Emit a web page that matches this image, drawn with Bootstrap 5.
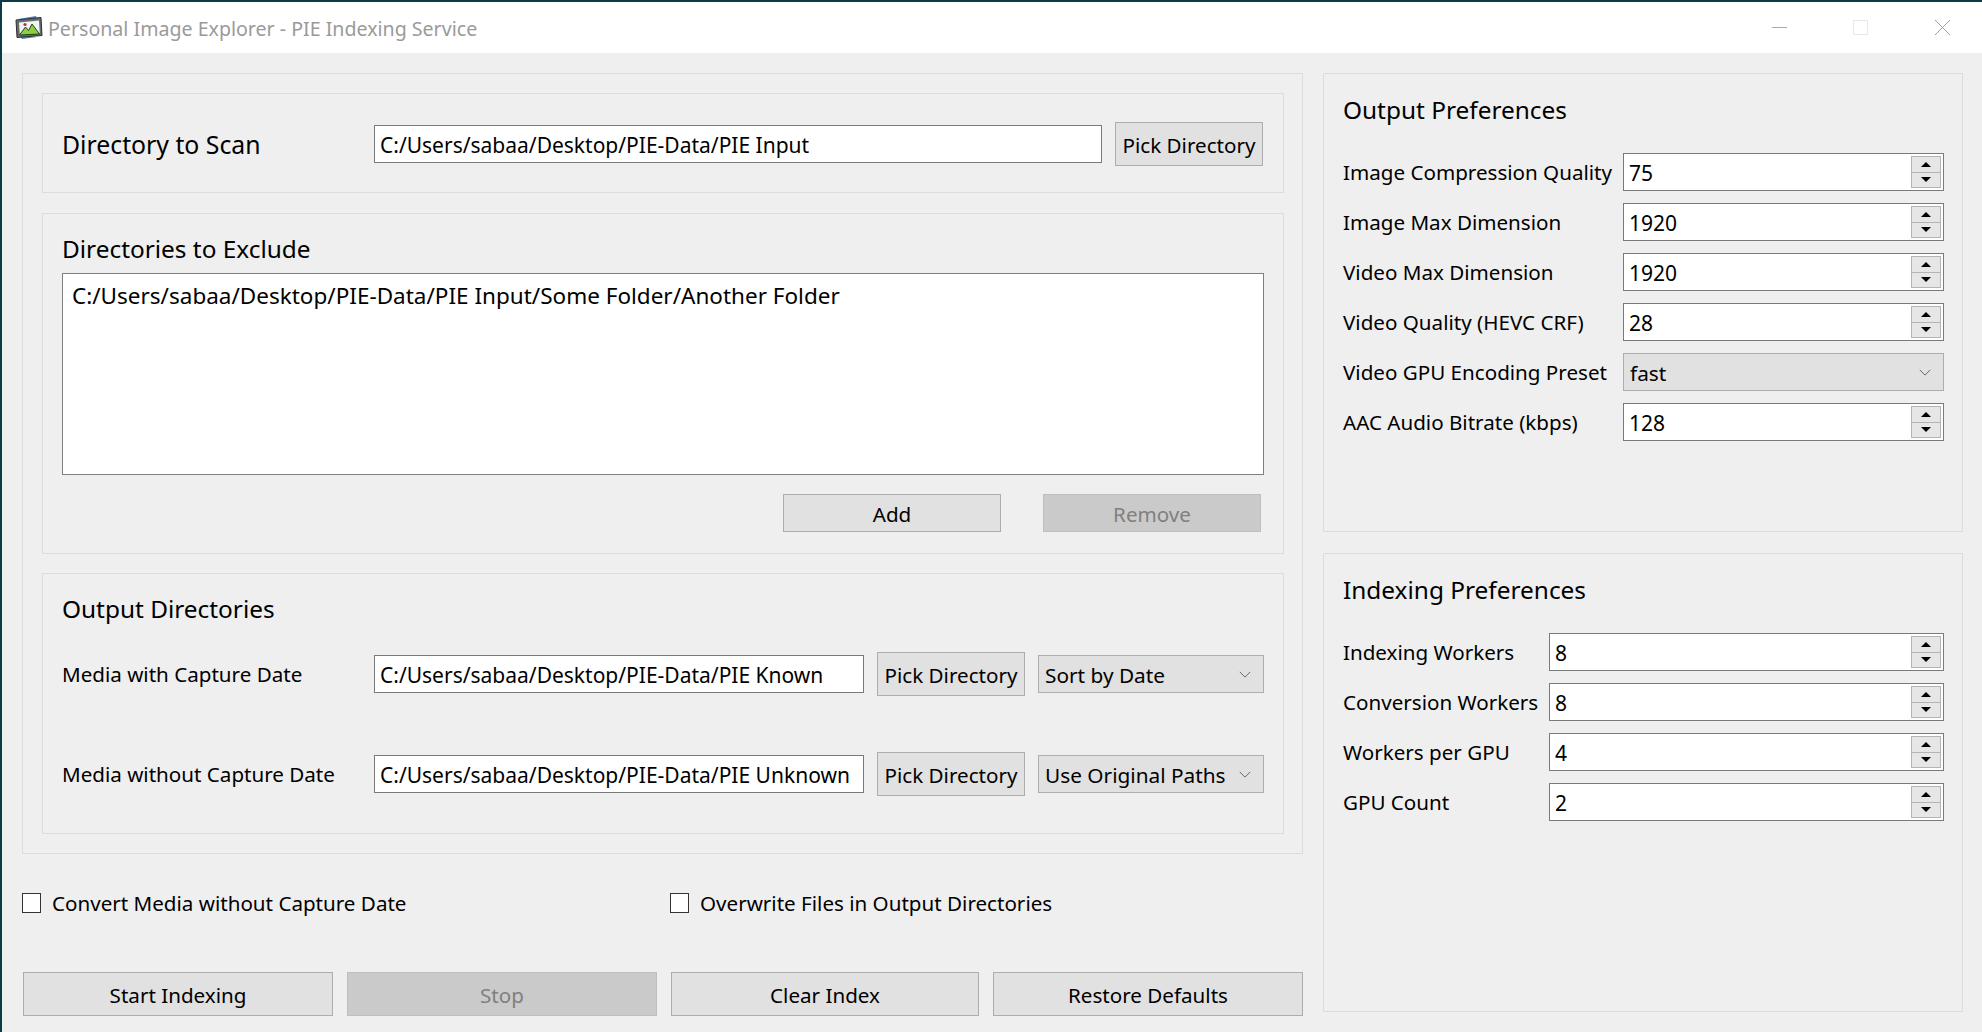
<!DOCTYPE html>
<html lang="en">
<head>
    <meta charset="UTF-8">
    <meta name="viewport" content="width=device-width, initial-scale=1.0">
    <title>Personal Image Explorer - PIE Indexing Service</title>
    <link href="https://cdn.jsdelivr.net/npm/bootstrap@5.3.2/dist/css/bootstrap.min.css" rel="stylesheet">
    <style>
        html, body { height: 100%; }
        body {
            background-color: #efefef;
            color: #000;
            font-family: "Noto Sans", "Liberation Sans", sans-serif;
            font-size: 20.6px;
            overflow: hidden;
            border-left: 2px solid #0d3a44;
            border-top: 2px solid #0d3a44;
        }
        .title-strip { height: 51px; background: #fff; color: #9a9a9a; font-size: 19.6px; padding-left: 13px; }
        .title-strip .app-name { margin-left: 5px; padding-top: 2px; }
        .win-btns { margin-left: auto; }
        .win-btn { display: block; width: 15px; height: 15px; }
        .win-slot-min { margin-right: 66px; }
        .win-slot-max { margin-right: 67px; }
        .win-slot-close { margin-right: 32px; }
        .work { padding: 20px 0 0 20px; }
        .left-col { width: 1281px; }
        .right-col { width: 640px; margin-left: 20px; gap: 21px; }
        .frame { border: 1px solid #dcdcdc; }
        .outer-frame { height: 781px; padding: 19px 18px 0 19px; }
        .panel-box { height: 459px; padding: 21px 18px 0 19px; }
        .box-scan { height: 100px; padding: 2px 20px 0 19px; }
        .box-exclude { height: 341px; padding: 20px 19px 0 19px; margin-top: 20px; }
        .box-output { height: 261px; padding: 20px 19px 0 19px; margin-top: 19px; }
        .group-title { font-size: 24.4px; line-height: 30px; }
        .lbl-wide { width: 312px; flex: none; }
        .scan-label { font-size: 24.8px; padding-top: 2px; }
        .path-input.form-control {
            height: 38px; border: 1px solid #7a7a7a; border-radius: 0; padding: 2px 5px 0;
            font-size: 21px; color: #000; background: #fff; box-shadow: none; flex: none;
        }
        .input-scan { width: 728px; }
        .input-mid { width: 490px; }
        .pick-btn.btn, .act-btn.btn {
            background: #e1e1e1; border: 1px solid #adadad; border-radius: 0; color: #000;
            font-size: 20.6px; padding: 2px 0 0; line-height: 1;
        }
        .pick-btn.btn { width: 148px; height: 44px; flex: none; margin-left: 13px; }
        .act-btn.btn:disabled { background: #cacaca; border-color: #bfbfbf; color: #808080; opacity: 1; }
        .exclude-list { height: 202px; background: #fff; border: 1px solid #7f7f7f; padding: 7px 9px; line-height: 30px; font-size: 22.5px; margin-top: 9px; }
        .exclude-btns { margin-top: 19px; padding-right: 3px; gap: 42px; }
        .act-small { width: 218px; height: 38px; }
        .act-big { height: 44px; }
        .dir-row { height: 44px; }
        .dir-row-a { margin-top: 28px; }
        .dir-row-b { margin-top: 56px; }
        .combo.form-select {
            height: 38px; border: 1px solid #adadad; border-radius: 0; background-color: #e1e1e1;
            color: #000; font-size: 20.8px; padding: 1px 6px 0; line-height: 34px; box-shadow: none;
            background-position: right 11px center; background-size: 14px 9px;
            background-image: url("data:image/svg+xml,%3csvg xmlns='http://www.w3.org/2000/svg' viewBox='0 0 16 10'%3e%3cpath fill='none' stroke='%23555' d='M2 2l6 6 6-6'/%3e%3c/svg%3e");
        }
        .combo-side { width: 226px; flex: none; margin-left: 13px; }
        .option-row { margin-top: 39px; height: 20px; }
        .tick-label { display: flex; align-items: center; line-height: 20px; }
        .tick-box { width: 19px; height: 20px; background: #fff; border: 1px solid #333; margin-right: 11px; flex: none; }
        .tick-a { width: 648px; }
        .bottom-btns { margin-top: 59px; padding-left: 1px; }
        .bottom-btns .btn { flex: none; }
        .w-start { width: 310px; margin-right: 14px; }
        .w-stop { width: 310px; margin-right: 14px; }
        .w-clear { width: 308px; margin-right: 14px; }
        .w-restore { width: 310px; }
        .panel-rows { margin-top: 28px; gap: 12px; }
        .pref-row { height: 38px; }
        .lbl-pref { width: 280px; flex: none; }
        .lbl-index { width: 206px; flex: none; }
        .spin-field { flex: 1 1 0; min-width: 0; height: 38px; border: 1px solid #7a7a7a; background: #fff; padding: 2px; }
        .spin-field input { flex: 1 1 0; min-width: 0; width: 0; border: 0; outline: 0; padding: 4px 2px 0 3px; font-size: 21px; background: transparent; color: #000; }
        .spin-col { width: 30px; flex: none; border: 1px solid #b4b4b4; background: #e6e6e6; }
        .spin-part { flex: 1 1 0; }
        .spin-part + .spin-part { border-top: 1px solid #b4b4b4; }
        .arrow-up { width: 0; height: 0; border-left: 5px solid transparent; border-right: 5px solid transparent; border-bottom: 5px solid #000; }
        .arrow-down { width: 0; height: 0; border-left: 5px solid transparent; border-right: 5px solid transparent; border-top: 5px solid #000; }
    </style>
</head>
<body>
    <!-- barre de titre -->
    <header class="title-strip d-flex align-items-center">
        <svg width="28" height="25" viewBox="0 0 28 25">
            <path d="M3 4 21 1l1 3zM5 21l17 1-15 2z" fill="#3d8fdc"/>
            <path d="M1 5 26 2.500l1 18-25 2z" fill="#6a6a6a" stroke="#2e2e2e"/>
            <path d="M4 7.500 24 5.500l.8 13-20 1.500z" fill="#eef6f8"/>
            <path d="M4.500 20l6-8 3 3.500 3.500-6.500 7.500 10z" fill="#8ccf3f" stroke="#24401a"/>
            <circle cx="10" cy="9.500" r="1.600" fill="#c8283c"/>
        </svg>
        <span class="app-name">Personal Image Explorer - PIE Indexing Service</span>
        <div class="win-btns d-flex align-items-center">
            <svg class="win-btn win-slot-min" viewBox="0 0 15 15"><path d="M0 7.500h15" stroke="#aaa"/></svg>
            <svg class="win-btn win-slot-max" viewBox="0 0 15 15"><rect x=".5" y=".5" width="14" height="14" fill="none" stroke="#e8e8e8"/></svg>
            <svg class="win-btn win-slot-close" viewBox="0 0 15 15"><path d="M0 0l15 15M15 0 0 15" stroke="#a0a0a0"/></svg>
        </div>
    </header>

    <main class="work d-flex">
        <section class="left-col">
            <div class="frame outer-frame">
                <div class="frame box-scan d-flex align-items-center">
                    <label class="lbl-wide scan-label" for="scan-dir">Directory to Scan</label>
                    <input id="scan-dir" class="form-control path-input input-scan" type="text" value="C:/Users/sabaa/Desktop/PIE-Data/PIE Input">
                    <button class="btn pick-btn">Pick Directory</button>
                </div>
                <div class="frame box-exclude">
                    <div class="group-title">Directories to Exclude</div>
                    <div class="exclude-list">C:/Users/sabaa/Desktop/PIE-Data/PIE Input/Some Folder/Another Folder</div>
                    <div class="exclude-btns d-flex justify-content-end">
                        <button class="btn act-btn act-small">Add</button>
                        <button class="btn act-btn act-small" disabled>Remove</button>
                    </div>
                </div>
                <div class="frame box-output">
                    <div class="group-title">Output Directories</div>
                    <div class="dir-row dir-row-a d-flex align-items-center">
                        <span class="lbl-wide">Media with Capture Date</span>
                        <input class="form-control path-input input-mid" type="text" value="C:/Users/sabaa/Desktop/PIE-Data/PIE Known">
                        <button class="btn pick-btn">Pick Directory</button>
                        <select class="form-select combo combo-side"><option>Sort by Date</option></select>
                    </div>
                    <div class="dir-row dir-row-b d-flex align-items-center">
                        <span class="lbl-wide">Media without Capture Date</span>
                        <input class="form-control path-input input-mid" type="text" value="C:/Users/sabaa/Desktop/PIE-Data/PIE Unknown">
                        <button class="btn pick-btn">Pick Directory</button>
                        <select class="form-select combo combo-side"><option>Use Original Paths</option></select>
                    </div>
                </div>
            </div>
            <div class="option-row d-flex">
                <div class="tick-label tick-a"><span class="tick-box"></span><span>Convert Media without Capture Date</span></div>
                <div class="tick-label"><span class="tick-box"></span><span>Overwrite Files in Output Directories</span></div>
            </div>
            <div class="bottom-btns d-flex">
                <button class="btn act-btn act-big w-start">Start Indexing</button>
                <button class="btn act-btn act-big w-stop" disabled>Stop</button>
                <button class="btn act-btn act-big w-clear">Clear Index</button>
                <button class="btn act-btn act-big w-restore">Restore Defaults</button>
            </div>
        </section>

        <aside class="right-col d-flex flex-column" id="prefs"></aside>
    </main>

    <script src="https://cdn.jsdelivr.net/npm/bootstrap@5.3.2/dist/js/bootstrap.bundle.min.js"></script>
    <script>
        // les deux panneaux de droite sont generes depuis les donnees
        const panels = [
            { title: 'Output Preferences', labelClass: 'lbl-pref', rows: [
                ['Image Compression Quality', '75'],
                ['Image Max Dimension', '1920'],
                ['Video Max Dimension', '1920'],
                ['Video Quality (HEVC CRF)', '28'],
                ['Video GPU Encoding Preset', 'fast', true],
                ['AAC Audio Bitrate (kbps)', '128']
            ]},
            { title: 'Indexing Preferences', labelClass: 'lbl-index', rows: [
                ['Indexing Workers', '8'],
                ['Conversion Workers', '8'],
                ['Workers per GPU', '4'],
                ['GPU Count', '2']
            ]}
        ];

        function renderRow(row, labelClass) {
            const field = row[2]
                ? `<select class="form-select combo"><option>${row[1]}</option></select>`
                : `<div class="spin-field d-flex">
                       <input type="text" value="${row[1]}">
                       <div class="spin-col d-flex flex-column">
                           <div class="spin-part d-flex align-items-center justify-content-center"><span class="arrow-up"></span></div>
                           <div class="spin-part d-flex align-items-center justify-content-center"><span class="arrow-down"></span></div>
                       </div>
                   </div>`;
            return `<div class="pref-row d-flex align-items-center"><span class="${labelClass}">${row[0]}</span>${field}</div>`;
        }

        document.getElementById('prefs').innerHTML = panels.map(p => `
            <div class="frame panel-box">
                <div class="group-title">${p.title}</div>
                <div class="panel-rows d-flex flex-column">${p.rows.map(r => renderRow(r, p.labelClass)).join('')}</div>
            </div>`).join('');
    </script>
</body>
</html>
